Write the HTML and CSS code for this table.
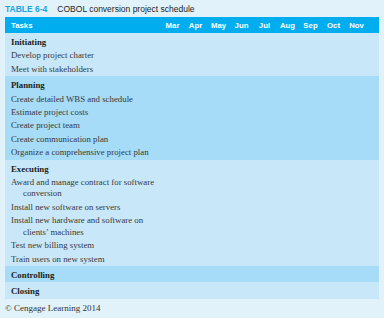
FILE: index.html
```html
<!DOCTYPE html>
<html>
<head>
<meta charset="utf-8">
<link rel="stylesheet" href="styles.css">
</head>
<body>
<div class="page">
  <div class="caption"><span class="label">TABLE 6-4</span><span class="title">COBOL conversion project schedule</span></div>
  <div class="table">
    <div class="head">
      <span class="tasks">Tasks</span>
      <span>Mar</span><span>Apr</span><span>May</span><span>Jun</span><span>Jul</span><span>Aug</span><span>Sep</span><span>Oct</span><span>Nov</span>
    </div>
    <div class="section light">
      <div class="row group">Initiating</div>
      <div class="row">Develop project charter</div>
      <div class="row">Meet with stakeholders</div>
    </div>
    <div class="section dark">
      <div class="row group">Planning</div>
      <div class="row">Create detailed WBS and schedule</div>
      <div class="row">Estimate project costs</div>
      <div class="row">Create project team</div>
      <div class="row">Create communication plan</div>
      <div class="row">Organize a comprehensive project plan</div>
    </div>
    <div class="section light">
      <div class="row group">Executing</div>
      <div class="row">Award and manage contract for software conversion</div>
      <div class="row">Install new software on servers</div>
      <div class="row">Install new hardware and software on clients’ machines</div>
      <div class="row">Test new billing system</div>
      <div class="row">Train users on new system</div>
    </div>
    <div class="section dark">
      <div class="row group">Controlling</div>
    </div>
    <div class="section light">
      <div class="row group">Closing</div>
    </div>
  </div>
  <div class="credit">© Cengage Learning 2014</div>
</div>
</body>
</html>
```
FILE: styles.css
```css
html, body {
  margin: 0;
  padding: 0;
  background: #e1f2fb;
}
.page {
  width: 384px;
  height: 318px;
  padding: 3px 0 0 5px;
  box-sizing: border-box;
  background: #e1f2fb;
}
.caption {
  display: flex;
  align-items: baseline;
  gap: 10px;
  height: 14px;
  font-family: "Liberation Sans", Arial, sans-serif;
  font-size: 8.5px;
  line-height: 13px;
}
.label {
  color: #1ba3dd;
  font-weight: bold;
}
.title {
  color: #222;
}
.table {
  width: 374px;
  background: #c7e8fa;
}
.head {
  display: grid;
  grid-template-columns: 156px repeat(9, 23px) 11px;
  height: 16px;
  align-items: center;
  background: #00adef;
  color: #fff;
  font-family: "Liberation Sans", Arial, sans-serif;
  font-weight: bold;
  font-size: 7.8px;
}
.head span {
  text-align: center;
}
.head .tasks {
  text-align: left;
  padding-left: 6px;
}
.section {
  padding: 3px 0 0;
}
.light { background: #c8e8fa; }
.dark { background: #a6dcf8; }
.row {
  width: 158px;
  padding: 1px 0 1px 18px;
  text-indent: -12px;
  font-family: "Liberation Serif", "Times New Roman", serif;
  font-size: 8.8px;
  line-height: 11.4px;
  color: #383838;
  box-sizing: border-box;
}
.group {
  font-weight: bold;
  color: #222;
}
.credit {
  margin-top: 4px;
  font-family: "Liberation Serif", "Times New Roman", serif;
  font-size: 9px;
  color: #333;
}
```
